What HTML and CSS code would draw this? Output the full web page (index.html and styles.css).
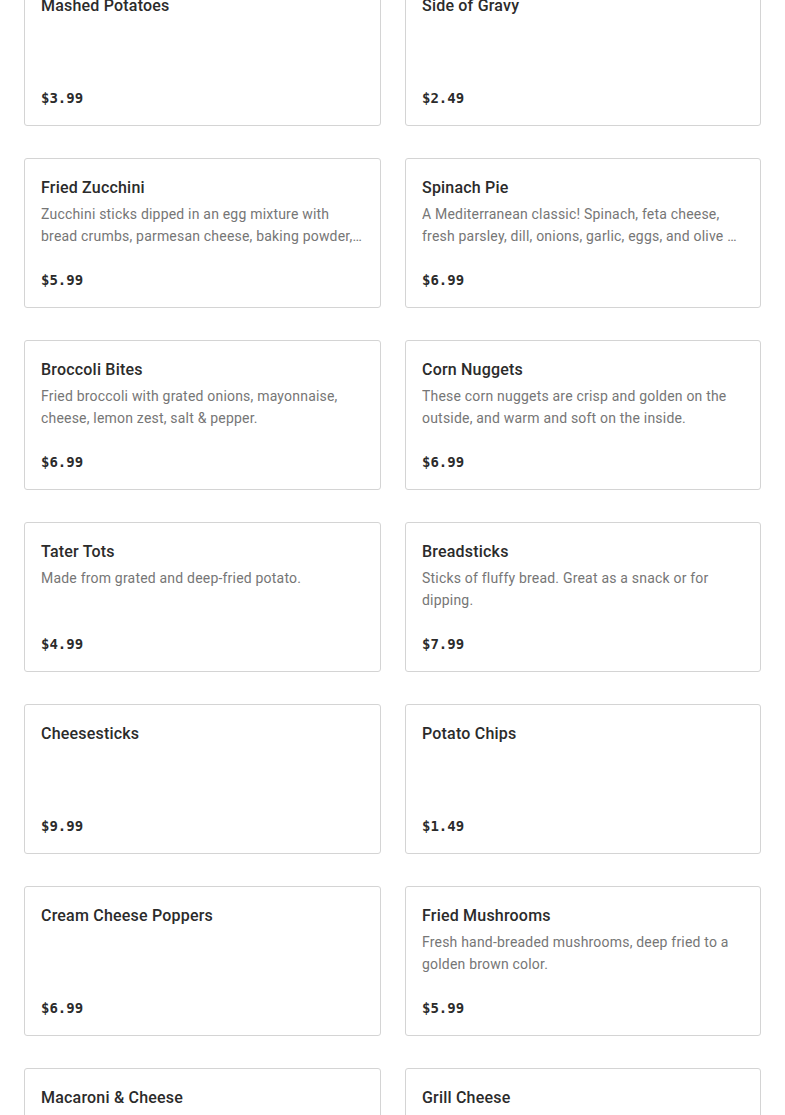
FILE: index.html
```html
<!DOCTYPE html>
<html lang="en">
<head>
<meta charset="utf-8">
<title>Menu</title>
<link rel="stylesheet" href="styles.css">
</head>
<body>
<main class="menu">
  <div class="card"><h3 class="name">Mashed Potatoes</h3><p class="desc"></p><div class="price">$3.99</div></div>
  <div class="card"><h3 class="name">Side of Gravy</h3><p class="desc"></p><div class="price">$2.49</div></div>
  <div class="card"><h3 class="name">Fried Zucchini</h3><p class="desc">Zucchini sticks dipped in an egg mixture with bread crumbs, parmesan cheese, baking powder, salt and pepper, then fried.</p><div class="price">$5.99</div></div>
  <div class="card"><h3 class="name">Spinach Pie</h3><p class="desc">A Mediterranean classic! Spinach, feta cheese, fresh parsley, dill, onions, garlic, eggs, and olive oil baked in phyllo.</p><div class="price">$6.99</div></div>
  <div class="card"><h3 class="name">Broccoli Bites</h3><p class="desc">Fried broccoli with grated onions, mayonnaise, cheese, lemon zest, salt &amp; pepper.</p><div class="price">$6.99</div></div>
  <div class="card"><h3 class="name">Corn Nuggets</h3><p class="desc">These corn nuggets are crisp and golden on the outside, and warm and soft on the inside.</p><div class="price">$6.99</div></div>
  <div class="card"><h3 class="name">Tater Tots</h3><p class="desc">Made from grated and deep-fried potato.</p><div class="price">$4.99</div></div>
  <div class="card"><h3 class="name">Breadsticks</h3><p class="desc">Sticks of fluffy bread. Great as a snack or for dipping.</p><div class="price">$7.99</div></div>
  <div class="card"><h3 class="name">Cheesesticks</h3><p class="desc"></p><div class="price">$9.99</div></div>
  <div class="card"><h3 class="name">Potato Chips</h3><p class="desc"></p><div class="price">$1.49</div></div>
  <div class="card"><h3 class="name">Cream Cheese Poppers</h3><p class="desc"></p><div class="price">$6.99</div></div>
  <div class="card"><h3 class="name">Fried Mushrooms</h3><p class="desc">Fresh hand-breaded mushrooms, deep fried to a golden brown color.</p><div class="price">$5.99</div></div>
  <div class="card"><h3 class="name">Macaroni &amp; Cheese</h3><p class="desc">Elbow macaroni baked in a rich and creamy blend of cheddar cheeses.</p><div class="price">$5.99</div></div>
  <div class="card"><h3 class="name">Grill Cheese</h3><p class="desc"></p><div class="price">$4.99</div></div>
</main>
</body>
</html>
```
FILE: styles.css
```css
html, body {
  margin: 0;
  padding: 0;
  background: #ffffff;
}
body {
  font-family: "Roboto", "Liberation Sans", sans-serif;
  color: #2d2d2d;
}
.menu {
  display: grid;
  grid-template-columns: 357px 356px;
  column-gap: 24px;
  row-gap: 32px;
  padding: 0 24px;
  margin-top: -24px;
}
.card {
  box-sizing: border-box;
  height: 150px;
  border: 1px solid #d4d4d4;
  border-radius: 3px;
  padding: 16px;
  display: flex;
  flex-direction: column;
}
.name {
  margin: 0;
  font-size: 16px;
  line-height: 26px;
  font-weight: 500;
  letter-spacing: 0.2px;
  color: #2b2b2b;
}
.desc {
  margin: 2px 0 0;
  font-size: 14px;
  line-height: 22px;
  letter-spacing: 0.2px;
  color: #767676;
  display: -webkit-box;
  -webkit-line-clamp: 2;
  -webkit-box-orient: vertical;
  overflow: hidden;
}
.price {
  margin-top: auto;
  font-family: "DejaVu Sans Mono", "Liberation Mono", monospace;
  font-weight: 700;
  font-size: 14px;
  line-height: 22px;
  color: #2b2b2b;
}
```
